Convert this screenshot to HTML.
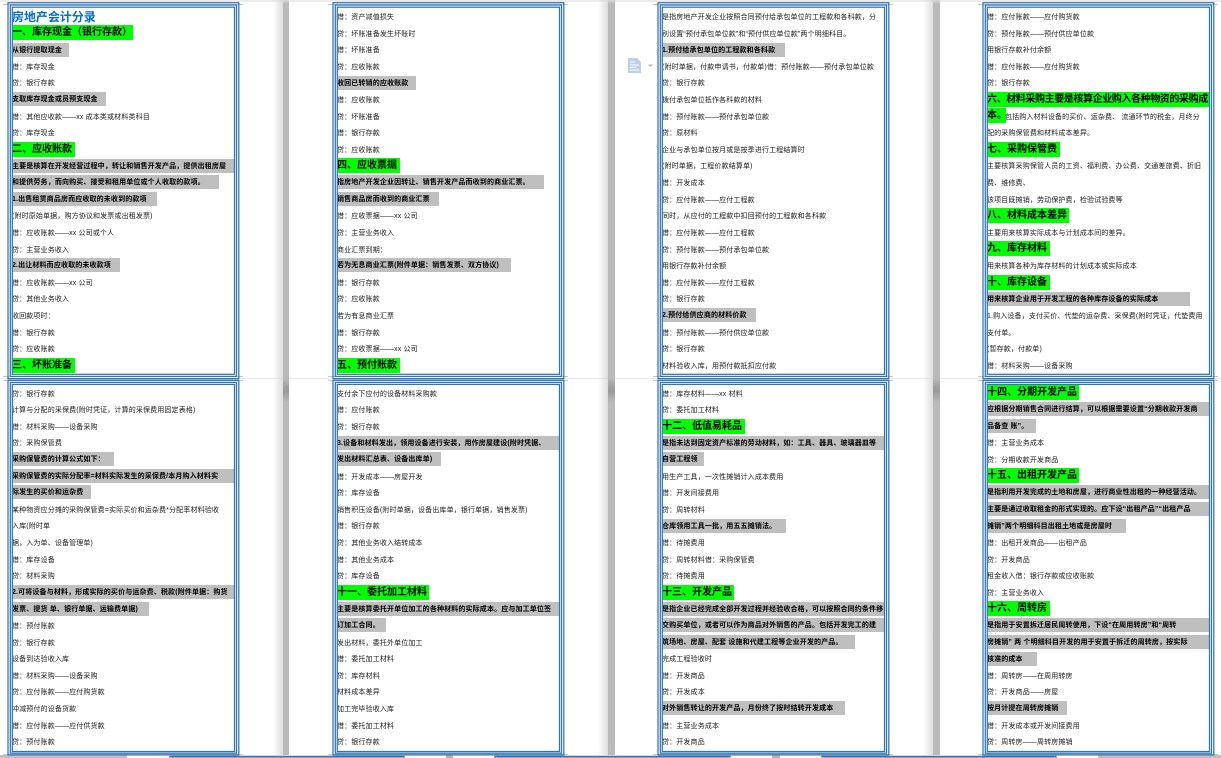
<!DOCTYPE html>
<html lang="zh"><head><meta charset="utf-8"><title>房地产会计分录</title>
<style>
html,body{margin:0;padding:0;width:1221px;height:758px;overflow:hidden;background:#fff}
body{position:relative;font-family:"Liberation Sans","Noto Sans CJK SC",sans-serif;color:#1a1a1a}
.a{position:absolute}
.gut{position:absolute;top:0;height:755px;background:linear-gradient(to bottom,#d8d8d8 0,#bababa 4px,#bababa 378px,#a2a2a2 386px,#9c9c9c 392px,#bababa 402px,#bababa 755px)}
.sh{position:absolute;top:0;height:755px;width:10px;background:linear-gradient(to right,rgba(210,210,210,0),rgba(210,210,210,.75))}
.in{position:absolute;overflow:hidden;width:221px}
.in>div{display:flow-root;height:16.62px;line-height:19.6px;font-size:7px;letter-spacing:.14px;white-space:nowrap;text-indent:-1px}
.in b{display:block;height:14px;margin-top:1.3px;line-height:15.6px;white-space:nowrap;overflow:hidden}
.g{background:#bfbfbf;font-weight:700;color:#000}
.h{background:#00ff00;font-weight:700;color:#000;font-size:10px;letter-spacing:0;height:15px!important;margin-top:.8px!important;line-height:15px!important}
.in>.t{color:#0070c0;font-size:12px;font-weight:700;letter-spacing:-.05px;line-height:18px}
</style></head><body>
<div class="a" style="left:0;top:0;width:1221px;height:2px;background:#ececec"></div>
<div class="a" style="left:0;top:378px;width:1221px;height:1px;background:#e8e8e8"></div>
<div class="sh" style="left:273px"></div><div class="gut" style="left:283px;width:6px"></div>
<div class="sh" style="left:598px"></div><div class="gut" style="left:608px;width:7px"></div>
<div class="sh" style="left:923px"></div><div class="gut" style="left:933px;width:7px"></div>
<div class="a" style="left:0;top:755px;width:127px;height:3px;background:#c0c0c0"></div>
<div class="a" style="left:446px;top:755px;width:7px;height:3px;background:#b4b4b4"></div>
<div class="a" style="left:772px;top:755px;width:8px;height:3px;background:#b4b4b4"></div>
<div class="a" style="left:1098px;top:755px;width:123px;height:3px;background:#c0c0c0"></div>

<svg class="a" style="left:627px;top:57px" width="30" height="17" viewBox="0 0 30 17">
<path d="M1 1H10L14 5V16H1Z" fill="#bcd0ea"/><path d="M3 5H8M3 8H12M3 10.5H9M3 13H12" stroke="#fff" stroke-width="1.1" fill="none"/><path d="M21 7.5H26L23.5 10Z" fill="#b5b5b5"/></svg>

<div class="in" style="left:13px;top:8px;height:366px">
<div class="t">房地产会计分录</div>
<div><b class="h" style="width:120px">一、库存现金（银行存款）</b></div>
<div><b class="g" style="width:56px">从银行提取现金</b></div>
<div>借：库存现金</div>
<div>贷：银行存款</div>
<div><b class="g" style="width:93px">支取库存现金或员预支现金</b></div>
<div>借：其他应收款——xx 成本类或材料类科目</div>
<div>贷：库存现金</div>
<div><b class="h" style="width:62px">二、应收账款</b></div>
<div><b class="g" style="width:221px">主要是核算在开发经营过程中，转让和销售开发产品，提供出租房屋</b></div>
<div><b class="g" style="width:206px">和提供劳务，而向购买、接受和租用单位或个人收取的款项。</b></div>
<div><b class="g" style="width:144px">1.出售租赁商品房而应收取的未收到的款项</b></div>
<div>(附时原始单据，购方协议和发票或出租发票)</div>
<div>借：应收账款——xx 公司或个人</div>
<div>贷：主营业务收入</div>
<div><b class="g" style="width:107px">2.出让材料而应收取的未收款项</b></div>
<div>借：应收账款——xx 公司</div>
<div>贷：其他业务收入</div>
<div>收回款项时：</div>
<div>借：银行存款</div>
<div>贷：应收账款</div>
<div><b class="h" style="width:62px">三、坏账准备</b></div>
</div>

<div class="in" style="left:338px;top:8px;height:366px">
<div>借：资产减值损失</div>
<div>贷：坏账准备发生坏账时</div>
<div>借：坏账准备</div>
<div>贷：应收账款</div>
<div><b class="g" style="width:78px">收回已转销的应收账款</b></div>
<div>借：应收账款</div>
<div>贷：坏账准备</div>
<div>借：银行存款</div>
<div>贷：应收账款</div>
<div><b class="h" style="width:62px">四、应收票据</b></div>
<div><b class="g" style="width:206px">指房地产开发企业因转让、销售开发产品而收到的商业汇票。</b></div>
<div><b class="g" style="width:101px">销售商品房而收到的商业汇票</b></div>
<div>借：应收票据——xx 公司</div>
<div>贷：主营业务收入</div>
<div>商业汇票到期：</div>
<div><b class="g" style="width:173px">若为无息商业汇票(附件单据：销售发票、双方协议)</b></div>
<div>借：银行存款</div>
<div>贷：应收账款</div>
<div>若为有息商业汇票</div>
<div>借：银行存款</div>
<div>贷：应收票据——xx 公司</div>
<div><b class="h" style="width:62px">五、预付账款</b></div>
</div>

<div class="in" style="left:663px;top:8px;height:366px">
<div>是指房地产开发企业按照合同预付给承包单位的工程款和各科款，分</div>
<div>别设置“预付承包单位款”和“预付供应单位款”两个明细科目。</div>
<div><b class="g" style="width:122px">1.预付给承包单位的工程款和各科款</b></div>
<div>(附时单据，付款申请书，付款单)借：预付账款——预付承包单位款</div>
<div>贷：银行存款</div>
<div>拨付承包单位抵作各科款的材料</div>
<div>借：预付账款——预付承包单位款</div>
<div>贷：原材料</div>
<div>企业与承包单位按月或是按季进行工程结算时</div>
<div>(附时单据，工程价款结算单)</div>
<div>借：开发成本</div>
<div>贷：应付账款——应付工程款</div>
<div>同时，从应付的工程款中扣回预付的工程款和各科款</div>
<div>借：应付账款——应付工程款</div>
<div>贷：预付账款——预付承包单位款</div>
<div>用银行存款补付余额</div>
<div>借：应付账款——应付工程款</div>
<div>贷：银行存款</div>
<div><b class="g" style="width:93px">2.预付给供应商的材料价款</b></div>
<div>借：预付账款——预付供应单位款</div>
<div>贷：银行存款</div>
<div>材料验收入库，用预付款抵扣应付款</div>
</div>

<div class="in" style="left:988px;top:8px;height:366px">
<div>借：应付账款——应付购货款</div>
<div>贷：预付账款——预付供应单位款</div>
<div>用银行存款补付余额</div>
<div>借：应付账款——应付购货款</div>
<div>贷：银行存款</div>
<div><b class="h" style="width:221px;letter-spacing:-.4px">六、材料采购主要是核算企业购入各种物资的采购成</b></div>
<div style="position:relative"><b class="h" style="width:18px">本。</b><span style="position:absolute;left:18px;top:0">包括购入材料设备的买价、运杂费、 流通环节的税金，月终分</span></div>
<div>配的采购保管费和材料成本差异。</div>
<div><b class="h" style="width:72px">七、采购保管费</b></div>
<div>主要核算采购保管人员的工资、福利费、办公费、交通差旅费、折旧</div>
<div>费、维修费、</div>
<div>该项目既摊销，劳动保护费，检验试验费等</div>
<div><b class="h" style="width:81px">八、材料成本差异</b></div>
<div>主要用来核算实际成本与计划成本间的差异。</div>
<div><b class="h" style="width:62px">九、库存材料</b></div>
<div>用来核算各种为库存材料的计划成本或实际成本</div>
<div><b class="h" style="width:62px">十、库存设备</b></div>
<div><b class="g" style="width:202px">用来核算企业用于开发工程的各种库存设备的实际成本</b></div>
<div>1.购入设备，支付买价、代垫的运杂费、采保费(附时凭证，代垫费用</div>
<div>支付单。</div>
<div>(暂存款，付款单)</div>
<div>借：材料采购——设备采购</div>
</div>

<div class="in" style="left:13px;top:384.5px;height:367px">
<div>贷：银行存款</div>
<div>计算与分配的采保费(附时凭证，计算的采保费用固定表格)</div>
<div>借：材料采购——设备采购</div>
<div>贷：采购保管费</div>
<div><b class="g" style="width:101px">采购保管费的计算公式如下：</b></div>
<div><b class="g" style="width:221px">采购保管费的实际分配率=材料实际发生的采保费/本月购入材料实</b></div>
<div><b class="g" style="width:78px">际发生的买价和运杂费</b></div>
<div>某种物资应分摊的采购保管费=实际买价和运杂费*分配率材料验收</div>
<div>入库(附时单</div>
<div>据，入为单、设备管理单)</div>
<div>借：库存设备</div>
<div>贷：材料采购</div>
<div><b class="g" style="width:221px">2.可将设备与材料，形成实际的买价与运杂费、税款(附件单据：购货</b></div>
<div><b class="g" style="width:136px">发票、提货 单、银行单据、运输费单据)</b></div>
<div>借：预付账款</div>
<div>贷：银行存款</div>
<div>设备到达验收入库</div>
<div>借：材料采购——设备采购</div>
<div>贷：应付账款——应付购货款</div>
<div>冲减预付的设备货款</div>
<div>借：应付账款——应付供货款</div>
<div>贷：预付账款</div>
</div>

<div class="in" style="left:338px;top:384.5px;height:367px">
<div>支付余下应付的设备材料采购款</div>
<div>借：应付账款</div>
<div>贷：银行存款</div>
<div><b class="g" style="width:221px">3.设备和材料发出，领用设备进行安装，用作房屋建设(附时凭据、</b></div>
<div><b class="g" style="width:103px">发出材料汇总表、设备出库单)</b></div>
<div>借：开发成本——房屋开发</div>
<div>贷：库存设备</div>
<div>销售积压设备(附时单据，设备出库单，银行单据，销售发票)</div>
<div>借：银行存款</div>
<div>贷：其他业务收入结转成本</div>
<div>借：其他业务成本</div>
<div>贷：库存设备</div>
<div><b class="h" style="width:91px">十一、委托加工材料</b></div>
<div><b class="g" style="width:221px">主要是核算委托开单位加工的各种材料的实际成本。应与加工单位签</b></div>
<div><b class="g" style="width:48px">订加工合同。</b></div>
<div>发出材料，委托外单位加工</div>
<div>借：委托加工材料</div>
<div>贷：库存材料</div>
<div>材料成本差异</div>
<div>加工完毕验收入库</div>
<div>借：委托加工材料</div>
<div>贷：银行存款</div>
</div>

<div class="in" style="left:663px;top:384.5px;height:367px">
<div>借：库存材料——xx 材料</div>
<div>贷：委托加工材料</div>
<div><b class="h" style="width:82px">十二、低值易耗品</b></div>
<div><b class="g" style="width:221px">是指未达到固定资产标准的劳动材料，如：工具、器具、玻璃器皿等</b></div>
<div><b class="g" style="width:41px">自营工程领</b></div>
<div>用生产工具，一次性摊销计入成本费用</div>
<div>借：开发间接费用</div>
<div>贷：周转材料</div>
<div><b class="g" style="width:123px">仓库领用工具一批，用五五摊销法。</b></div>
<div>借：待摊费用</div>
<div>贷：周转材料借：采购保管费</div>
<div>贷：待摊费用</div>
<div><b class="h" style="width:71px">十三、开发产品</b></div>
<div><b class="g" style="width:221px">是指企业已经完成全部开发过程并经验收合格，可以按照合同约条件移</b></div>
<div><b class="g" style="width:221px">交购买单位，或者可以作为商品对外销售的产品。包括开发完工的建</b></div>
<div><b class="g" style="width:192px">筑场地、房屋、配套 设施和代建工程等企业开发的产品。</b></div>
<div>完成工程验收时</div>
<div>借：开发商品</div>
<div>贷：开发成本</div>
<div><b class="g" style="width:182px">对外销售转让的开发产品，月份终了按时结转开发成本</b></div>
<div>借：主营业务成本</div>
<div>贷：开发商品</div>
</div>

<div class="in" style="left:988px;top:384.5px;height:367px">
<div><b class="h" style="width:91px">十四、分期开发产品</b></div>
<div><b class="g" style="width:221px">应根据分期销售合同进行结算，可以根据需要设置“分期收款开发商</b></div>
<div><b class="g" style="width:48px">品备查 账”。</b></div>
<div>借：主营业务成本</div>
<div>贷：分期收款开发商品</div>
<div><b class="h" style="width:91px">十五、出租开发产品</b></div>
<div><b class="g" style="width:221px">是指利用开发完成的土地和房屋，进行商业性出租的一种经营活动。</b></div>
<div><b class="g" style="width:221px">主要是通过收取租金的形式实现的。应下设“出租产品”“出租产品</b></div>
<div><b class="g" style="width:138px">摊销”两个明细科目出租土地或是房屋时</b></div>
<div>借：出租开发商品——出租产品</div>
<div>贷：开发商品</div>
<div>租金收入借：银行存款或应收账款</div>
<div>贷：主营业务收入</div>
<div><b class="h" style="width:62px">十六、周转房</b></div>
<div><b class="g" style="width:221px">是指用于安置拆迁居民周转使用，下设“在周用转房”和“周转</b></div>
<div><b class="g" style="width:221px">房摊销” 两 个明细科目开发的用于安置于拆迁的周转房，按实际</b></div>
<div><b class="g" style="width:49px">核准的成本</b></div>
<div>借：周转房——在周用转房</div>
<div>贷：开发商品——房屋</div>
<div><b class="g" style="width:79px">按月计提在周转房摊销</b></div>
<div>借：开发成本或开发间接费用</div>
<div>贷：周转房——周转房摊销</div>
</div>

<svg class="a" style="left:0;top:0" width="1221" height="758" viewBox="0 0 1221 758" fill="none">
<g stroke="#c4c4c4" stroke-width="1">
<path d="M3 4.5H243M328 4.5H568M653 4.5H893M978 4.5H1218"/>
<path d="M3 376.5H243M328 376.5H568M653 376.5H893M978 376.5H1218"/>
<path d="M3 380.5H243M328 380.5H568M653 380.5H893M978 380.5H1218"/>
<path d="M3 754.5H243M328 754.5H568M653 754.5H893M978 754.5H1218"/>
</g>
<g stroke="#2e75b6" stroke-width="1.25">
<rect x="8" y="2.7" width="230.8" height="375.9"/><rect x="10.3" y="5" width="226.2" height="371.4"/><rect x="12.3" y="7.2" width="222.2" height="367.1"/>
<rect x="333" y="2.7" width="230.8" height="375.9"/><rect x="335.3" y="5" width="226.2" height="371.4"/><rect x="337.3" y="7.2" width="222.2" height="367.1"/>
<rect x="658" y="2.7" width="230.8" height="375.9"/><rect x="660.3" y="5" width="226.2" height="371.4"/><rect x="662.3" y="7.2" width="222.2" height="367.1"/>
<rect x="983" y="2.7" width="230.8" height="375.9"/><rect x="985.3" y="5" width="226.2" height="371.4"/><rect x="987.3" y="7.2" width="222.2" height="367.1"/>
<rect x="8" y="380.3" width="230.8" height="374.6"/><rect x="10.3" y="382.4" width="226.2" height="370.8"/><rect x="12.3" y="384.4" width="222.2" height="367.1"/>
<rect x="333" y="380.3" width="230.8" height="374.6"/><rect x="335.3" y="382.4" width="226.2" height="370.8"/><rect x="337.3" y="384.4" width="222.2" height="367.1"/>
<rect x="658" y="380.3" width="230.8" height="374.6"/><rect x="660.3" y="382.4" width="226.2" height="370.8"/><rect x="662.3" y="384.4" width="222.2" height="367.1"/>
<rect x="983" y="380.3" width="230.8" height="374.6"/><rect x="985.3" y="382.4" width="226.2" height="370.8"/><rect x="987.3" y="384.4" width="222.2" height="367.1"/>
<path d="M170 760V756.4H404V760M172 760V758H402V760"/>
<path d="M495 760V756.4H730V760M497 760V758H728V760"/>
<path d="M822 760V756.4H1056V760M824 760V758H1054V760"/>
</g>
</svg>
</body></html>
